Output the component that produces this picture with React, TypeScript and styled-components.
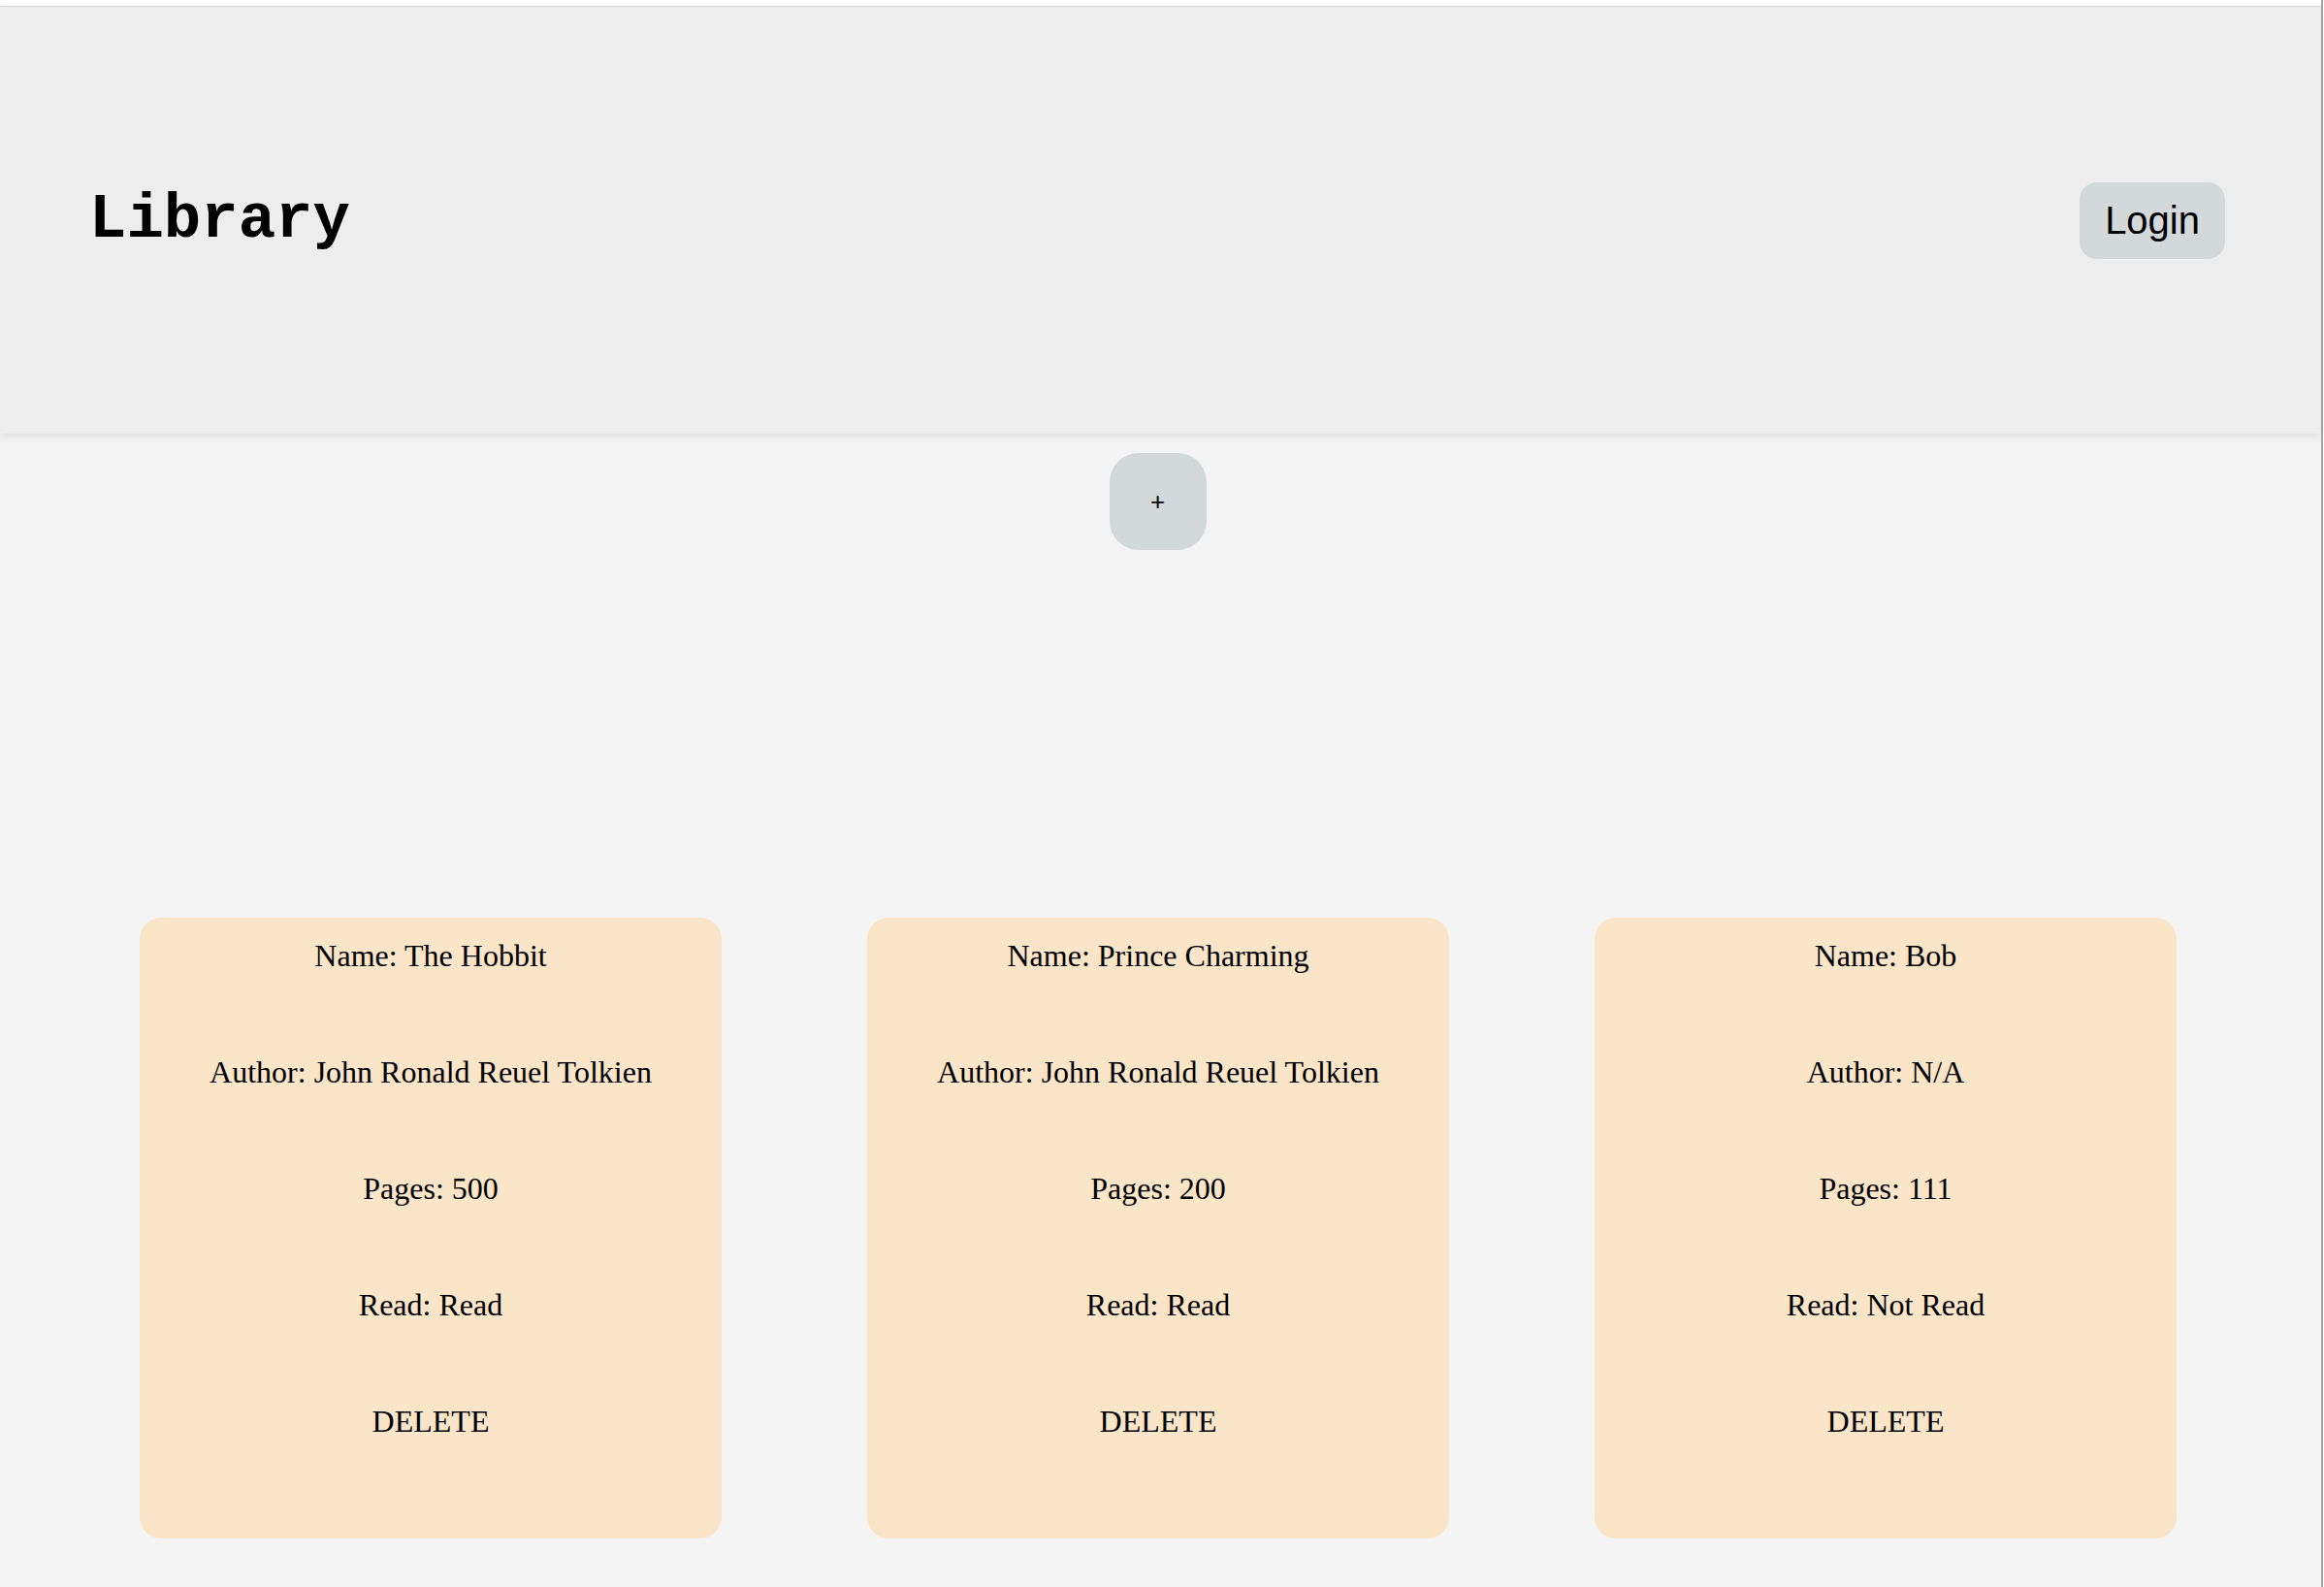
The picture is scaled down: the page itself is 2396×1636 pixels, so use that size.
import React from 'react';
import styled, { createGlobalStyle } from 'styled-components';

const GlobalStyle = createGlobalStyle`
  html, body {
    margin: 0;
    padding: 0;
    background: #ffffff;
  }
  * {
    box-sizing: border-box;
  }
`;

const Page = styled.div`
  min-height: 1636px;
  padding-top: 6px;
  border-right: 2px solid #a6a6a6;
  margin-right: 1px;
  display: flex;
  flex-direction: column;
`;

const Content = styled.div`
  flex: 1;
  background: #f4f4f4;
  border-top: 1px solid #dcdcdc;
  display: flex;
  flex-direction: column;
`;

const Header = styled.header`
  height: 440px;
  background: #ededed;
  display: flex;
  align-items: center;
  justify-content: space-between;
  padding: 0 99px 0 92px;
  box-shadow: 0 3px 8px rgba(0, 0, 0, 0.09);
  position: relative;
  z-index: 1;
`;

const Title = styled.h1`
  margin: 0;
  font-family: 'Liberation Mono', 'Courier New', monospace;
  font-weight: bold;
  font-size: 64px;
  color: #000;
`;

const GreyButton = styled.button`
  border: 0;
  background: #d3d8db;
  color: #000;
  cursor: pointer;
  font-family: 'Liberation Sans', Arial, sans-serif;
`;

const LoginButton = styled(GreyButton)`
  font-size: 40px;
  padding: 17px 26px;
  border-radius: 18px;
`;

const AddRow = styled.div`
  display: flex;
  justify-content: center;
  padding: 20px 6px 0 0;
`;

const AddButton = styled(GreyButton)`
  width: 100px;
  height: 100px;
  border-radius: 30px;
  font-size: 26px;
`;

const CardGrid = styled.div`
  display: flex;
  gap: 150px;
  padding-left: 144px;
  margin-top: 379px;
`;

const Card = styled.div`
  width: 600px;
  height: 640px;
  background: #fae5c9;
  border-radius: 22px;
  padding-top: 21px;
  display: flex;
  flex-direction: column;
  align-items: center;
  gap: 83px;
  font-family: 'Liberation Serif', 'Times New Roman', serif;
  font-size: 32px;
  color: #000;
`;

const Field = styled.div`
  text-align: center;
`;

const books = [
  { name: 'The Hobbit', author: 'John Ronald Reuel Tolkien', pages: 500, read: 'Read' },
  { name: 'Prince Charming', author: 'John Ronald Reuel Tolkien', pages: 200, read: 'Read' },
  { name: 'Bob', author: 'N/A', pages: 111, read: 'Not Read' },
];

export default function App() {
  return (
    <>
      <GlobalStyle />
      <Page>
        <Content>
          <Header>
            <Title>Library</Title>
            <LoginButton>Login</LoginButton>
          </Header>
          <AddRow>
            <AddButton>+</AddButton>
          </AddRow>
          <CardGrid>
            {books.map((b) => (
              <Card key={b.name}>
                <Field>Name: {b.name}</Field>
                <Field>Author: {b.author}</Field>
                <Field>Pages: {b.pages}</Field>
                <Field>Read: {b.read}</Field>
                <Field>DELETE</Field>
              </Card>
            ))}
          </CardGrid>
        </Content>
      </Page>
    </>
  );
}
